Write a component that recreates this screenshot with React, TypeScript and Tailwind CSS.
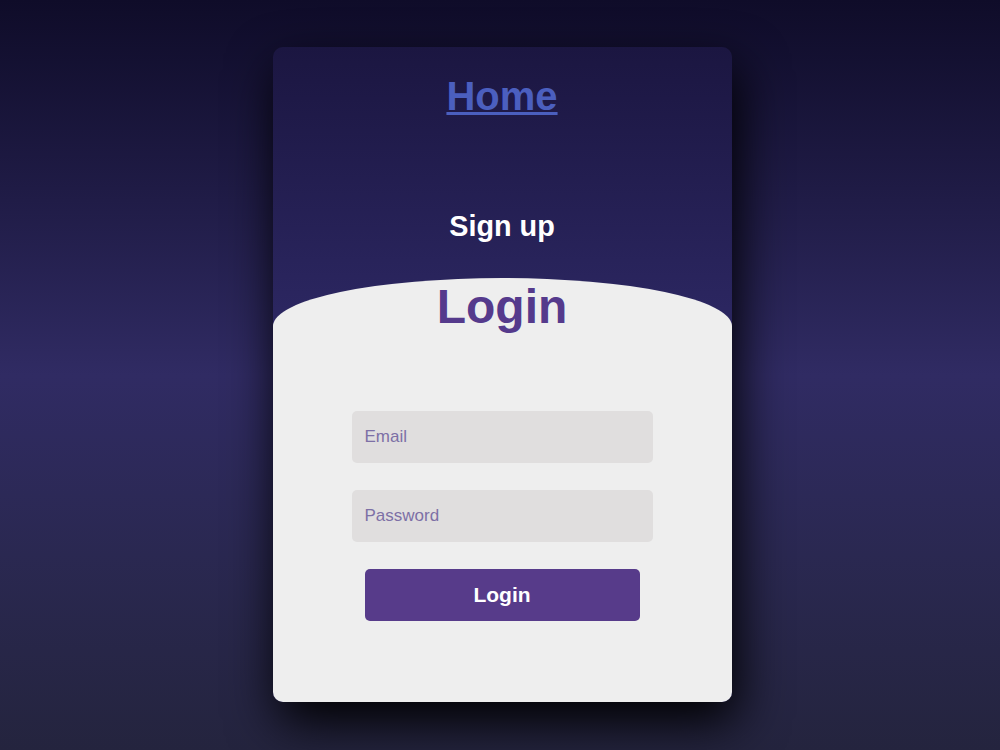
import { useState } from 'react';

const FONT = { fontFamily: '"Liberation Sans", Arial, sans-serif' };

function App() {
  const [email, setEmail] = useState('');
  const [password, setPassword] = useState('');

  return (
    <div
      className="min-h-[750px] w-full bg-gradient-to-b from-[#0f0c29] via-[#302b63] to-[#24243e] pl-[4px] pt-[47px]"
      style={FONT}
    >
      <div className="mx-auto flex h-[655px] w-[459px] flex-col overflow-hidden rounded-[10px] bg-gradient-to-b from-[#1b1641] via-[#2b2660] via-40% to-[#2b2660] shadow-[5px_20px_50px_#000]">
        <div className="pt-[29px] text-center">
          <a
            href="#"
            className="text-[40px] font-bold leading-none text-[#4b5fbf] underline decoration-[#4b5fbf] decoration-[3px]"
          >
            Home
          </a>
        </div>

        <p className="mt-[95px] text-center text-[28.8px] font-bold leading-none text-white">
          Sign up
        </p>

        <div className="mt-[37px] flex flex-1 flex-col items-center rounded-tl-[50%_48px] rounded-tr-[50%_48px] bg-[#eeeeee] pt-[5px]">
          <h1 className="text-[48px] font-bold leading-none text-[#553a8c]">Login</h1>

          <form
            className="mt-[80px] flex flex-col items-center"
            onSubmit={(event) => event.preventDefault()}
          >
            <input
              type="email"
              placeholder="Email"
              value={email}
              onChange={(event) => setEmail(event.target.value)}
              className="h-[52px] w-[301px] rounded-[5px] bg-[#e0dede] px-[13px] text-[17px] text-[#333] outline-none placeholder:text-[#7d70a6]"
            />
            <input
              type="password"
              placeholder="Password"
              value={password}
              onChange={(event) => setPassword(event.target.value)}
              className="mt-[27px] h-[52px] w-[301px] rounded-[5px] bg-[#e0dede] px-[13px] text-[17px] text-[#333] outline-none placeholder:text-[#7d70a6]"
            />
            <button
              type="submit"
              className="mt-[27px] h-[52px] w-[275px] rounded-[5px] bg-[#573b8a] text-[21px] font-bold text-white"
            >
              Login
            </button>
          </form>
        </div>
      </div>
    </div>
  );
}

export default App;
